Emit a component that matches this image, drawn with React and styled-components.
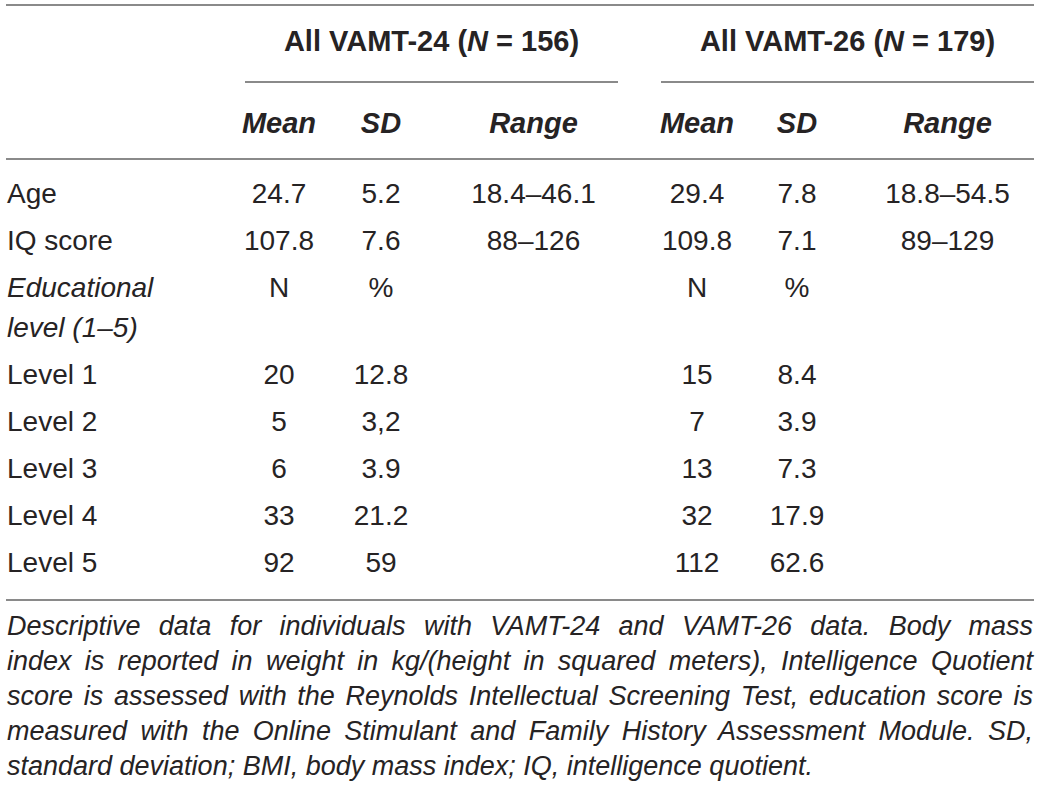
import React from 'react'
import styled, { createGlobalStyle } from 'styled-components'

const GlobalStyle = createGlobalStyle`
  html, body {
    margin: 0;
    padding: 0;
    background: #fff;
  }
  body {
    font-family: "Liberation Sans", Arial, Helvetica, sans-serif;
    color: #262324;
  }
`

const rows = [
  { label: 'Age', a: ['24.7', '5.2', '18.4–46.1'], b: ['29.4', '7.8', '18.8–54.5'] },
  { label: 'IQ score', a: ['107.8', '7.6', '88–126'], b: ['109.8', '7.1', '89–129'] },
  { label: <>Educational<br />level (1–5)</>, italic: true, a: ['N', '%', ''], b: ['N', '%', ''] },
  { label: 'Level 1', a: ['20', '12.8', ''], b: ['15', '8.4', ''] },
  { label: 'Level 2', a: ['5', '3,2', ''], b: ['7', '3.9', ''] },
  { label: 'Level 3', a: ['6', '3.9', ''], b: ['13', '7.3', ''] },
  { label: 'Level 4', a: ['33', '21.2', ''], b: ['32', '17.9', ''] },
  { label: 'Level 5', a: ['92', '59', ''], b: ['112', '62.6', ''] },
]

const caption = [
  'Descriptive data for individuals with VAMT-24 and VAMT-26 data. Body mass',
  'index is reported in weight in kg/(height in squared meters), Intelligence Quotient',
  'score is assessed with the Reynolds Intellectual Screening Test, education score is',
  'measured with the Online Stimulant and Family History Assessment Module. SD,',
  'standard deviation; BMI, body mass index; IQ, intelligence quotient.',
]

const App = () => {
  return (
    <Page>
      <GlobalStyle />
      <Rule />
      <Grid>
        <GroupTitle $col="2 / 5">
          <span>All VAMT-24 (<em>N</em> = 156)</span>
        </GroupTitle>
        <GroupTitle $col="6 / 9">
          <span>All VAMT-26 (<em>N</em> = 179)</span>
        </GroupTitle>

        <SubHead $col="2">Mean</SubHead>
        <SubHead>SD</SubHead>
        <SubHead>Range</SubHead>
        <SubHead $col="6">Mean</SubHead>
        <SubHead>SD</SubHead>
        <SubHead>Range</SubHead>
      </Grid>
      <Rule />
      <Body>
        {rows.map((r, i) => (
          <Grid key={i}>
            <Label $italic={r.italic}>{r.label}</Label>
            {r.a.map((v, j) => <Cell key={'a' + j}>{v}</Cell>)}
            <Cell />
            {r.b.map((v, j) => <Cell key={'b' + j}>{v}</Cell>)}
          </Grid>
        ))}
      </Body>
      <Rule />
      <Caption>
        {caption.map((line, i) => (
          <CaptionLine key={i} $last={i === caption.length - 1}>{line}</CaptionLine>
        ))}
      </Caption>
    </Page>
  )
}

const Page = styled.div`
  width: 1028px;
  padding: 4px 6px 0 6px;
`

const Rule = styled.div`
  height: 2px;
  background: #8a8a8a;
`

const Grid = styled.div`
  display: grid;
  grid-template-columns: 239px 68px 136px 169px 43px 72px 128px 173px;
`

const GroupTitle = styled.div`
  grid-column: ${p => p.$col};
  height: 71px;
  padding-bottom: 4px;
  border-bottom: 2px solid #8a8a8a;
  display: flex;
  align-items: center;
  justify-content: center;
  font-size: 29px;
  font-weight: 700;
  white-space: nowrap;

  em {
    font-style: italic;
  }
`

const SubHead = styled.div`
  grid-column: ${p => p.$col || 'auto'};
  height: 69px;
  padding-top: 6px;
  display: flex;
  align-items: center;
  justify-content: center;
  font-size: 29px;
  font-weight: 700;
  font-style: italic;
  white-space: nowrap;
`

const Body = styled.div`
  padding: 11px 0 12px;
`

const Label = styled.div`
  padding: 3px 0 4px 1px;
  font-size: 28px;
  line-height: 40px;
  font-style: ${p => (p.$italic ? 'italic' : 'normal')};
  white-space: nowrap;
`

const Cell = styled.div`
  display: flex;
  justify-content: center;
  padding: 3px 0 4px;
  font-size: 28px;
  line-height: 40px;
  white-space: nowrap;
`

const Caption = styled.div`
  padding: 8px 1px 0 1px;
  font-family: "Liberation Sans Narrow", "Liberation Sans", Arial, sans-serif;
  font-style: italic;
  font-size: 27px;
  line-height: 35px;
`

const CaptionLine = styled.div`
  text-align: justify;
  text-align-last: ${p => (p.$last ? 'left' : 'justify')};
  white-space: nowrap;
`

export default App
